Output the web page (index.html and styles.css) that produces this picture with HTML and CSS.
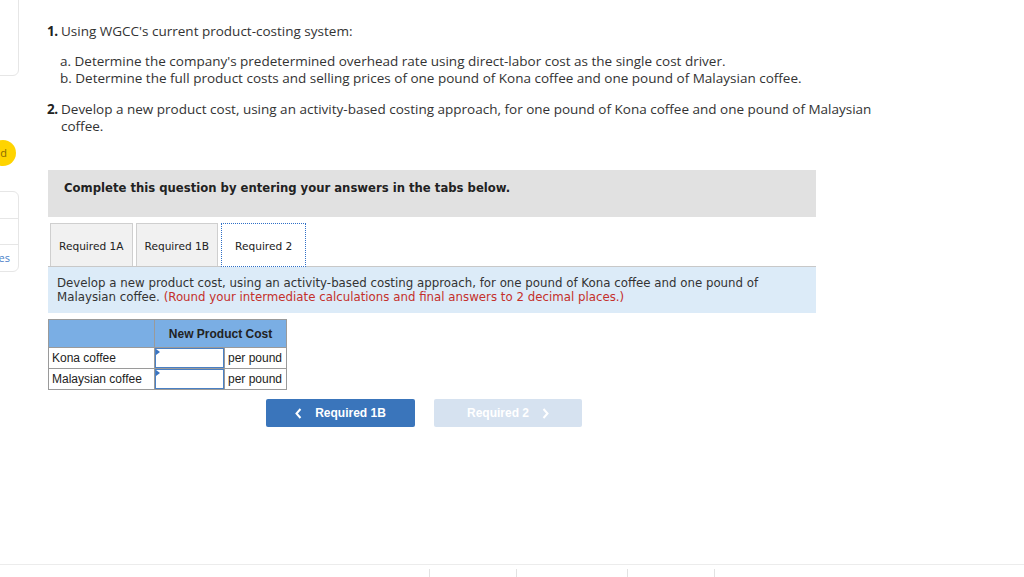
FILE: index.html
```html
<!DOCTYPE html>
<html lang="en">
<head>
<meta charset="utf-8">
<title>Product costing</title>
<link rel="stylesheet" href="styles.css">
</head>
<body>
<div class="page">
  <div class="main">
    <aside class="sidebar">
      <div class="side-card top-card"></div>
      <div class="badge">d</div>
      <div class="side-card list-card">
        <div class="side-row"></div>
        <div class="side-row"></div>
        <div class="side-row side-link">es</div>
      </div>
    </aside>
    <section class="content">
      <div class="item">
        <span class="num">1.</span>
        <span class="item-text">Using WGCC's current product-costing system:</span>
      </div>
      <div class="subs">
        <div>a. Determine the company's predetermined overhead rate using direct-labor cost as the single cost driver.</div>
        <div>b. Determine the full product costs and selling prices of one pound of Kona coffee and one pound of Malaysian coffee.</div>
      </div>
      <div class="item item-two">
        <span class="num">2.</span>
        <span class="item-text">Develop a new product cost, using an activity-based costing approach, for one pound of Kona coffee and one pound of Malaysian<br>coffee.</span>
      </div>

      <div class="instruction">Complete this question by entering your answers in the tabs below.</div>

      <div class="tabs">
        <div class="tab">Required 1A</div>
        <div class="tab">Required 1B</div>
        <div class="tab tab-active">Required 2</div>
      </div>

      <div class="prompt">Develop a new product cost, using an activity-based costing approach, for one pound of Kona coffee and one pound of<br>Malaysian coffee. <span class="note">(Round your intermediate calculations and final answers to 2 decimal places.)</span></div>

      <table class="grid">
        <thead>
          <tr>
            <th class="c-label"></th>
            <th class="c-head" colspan="2">New Product Cost</th>
          </tr>
        </thead>
        <tbody>
          <tr>
            <td class="c-label">Kona coffee</td>
            <td class="c-input"><span class="input"></span></td>
            <td class="c-unit">per pound</td>
          </tr>
          <tr>
            <td class="c-label">Malaysian coffee</td>
            <td class="c-input"><span class="input"></span></td>
            <td class="c-unit">per pound</td>
          </tr>
        </tbody>
      </table>

      <div class="nav">
        <div class="btn btn-prev">
          <svg class="chev" width="7" height="11" viewBox="0 0 7 11"><path d="M5.5 1 L1.5 5.5 L5.5 10" fill="none" stroke="#fff" stroke-width="2"/></svg>
          Required 1B
        </div>
        <div class="btn btn-next">
          Required 2
          <svg class="chev chev-r" width="7" height="11" viewBox="0 0 7 11"><path d="M1.5 1 L5.5 5.5 L1.5 10" fill="none" stroke="#fff" stroke-width="2"/></svg>
        </div>
      </div>
    </section>
  </div>
  <footer class="footer">
    <span class="tick t1"></span>
    <span class="tick t2"></span>
    <span class="tick t3"></span>
    <span class="tick t4"></span>
  </footer>
</div>
</body>
</html>
```

FILE: styles.css
```css
* { box-sizing: border-box; }

body {
  margin: 0;
  background: #ffffff;
  color: #333333;
  font-family: "Open Sans", Lato, Arial, sans-serif;
}

.page {
  display: flex;
  flex-direction: column;
  width: 1024px;
  height: 577px;
  overflow: hidden;
}

.main {
  display: flex;
  flex: 1;
}

/* ---------- sidebar ---------- */
.sidebar {
  width: 20px;
  flex-shrink: 0;
  display: flex;
  flex-direction: column;
}

.side-card {
  width: 80px;
  margin-left: -61px;
  border: 1px solid #e6e6e6;
  border-radius: 6px;
  background: #fff;
}

.top-card {
  margin-top: -10px;
  height: 86px;
}

.badge {
  margin-top: 64px;
  margin-left: -10px;
  width: 26px;
  height: 26px;
  border-radius: 50%;
  background: #ffd400;
  color: #8a6a00;
  font-family: "Open Sans", sans-serif;
  font-size: 11px;
  line-height: 26px;
  text-align: right;
  padding-right: 9px;
}

.list-card {
  margin-top: 25px;
  height: 81px;
  display: flex;
  flex-direction: column;
}

.side-row {
  height: 27px;
  border-bottom: 1px solid #e6e6e6;
}

.side-row:last-child {
  border-bottom: 0;
  flex: 1;
}

.side-link {
  text-align: right;
  padding-right: 8px;
  color: #4a80c8;
  font-family: "Open Sans", sans-serif;
  font-size: 11px;
  line-height: 26px;
}

/* ---------- content ---------- */
.content {
  flex: 1;
  padding: 23px 0 0 27px;
}

.item {
  display: flex;
  font-size: 13.5px;
  line-height: 17px;
  color: #333;
}

.num {
  font-weight: 700;
  width: 14px;
  flex-shrink: 0;
  color: #222;
  letter-spacing: -0.5px;
}

.subs {
  margin: 13px 0 14px 13px;
  font-size: 13.5px;
  line-height: 17px;
}

.instruction {
  margin: 35px 0 0 1px;
  width: 768px;
  height: 47px;
  background: #e1e1e1;
  padding: 11px 0 0 16px;
  font-family: "DejaVu Sans", Verdana, sans-serif;
  font-weight: 700;
  font-size: 11.65px;
  line-height: 15px;
  color: #222;
}

.tabs {
  margin: 6px 0 0 1px;
  width: 768px;
  display: flex;
  gap: 3px;
  padding-left: 2px;
  border-bottom: 1px solid #c8c8c8;
}

.tab {
  height: 43px;
  padding: 0 8px;
  border: 1px solid #cfcfcf;
  border-bottom: 0;
  background: #f1f1f1;
  font-family: "DejaVu Sans", Verdana, sans-serif;
  font-size: 10.6px;
  line-height: 44px;
  color: #222;
  white-space: nowrap;
}

.tab-active {
  background: #fff;
  border: 1px dotted #2f6fc6;
  border-bottom: 1px dotted #2f6fc6;
  padding: 0 13px;
  margin-bottom: -1px;
  height: 44px;
}

.prompt {
  margin-left: 1px;
  width: 768px;
  height: 46px;
  background: #dcebf8;
  padding: 9px 9px 0;
  font-family: "DejaVu Sans", Verdana, sans-serif;
  font-size: 11.8px;
  line-height: 14px;
  color: #333;
}

.note { color: #c4302b; }

/* ---------- table ---------- */
.grid {
  margin: 6px 0 0 1px;
  border-collapse: collapse;
  font-family: "Liberation Sans", Arial, sans-serif;
  font-size: 12px;
  color: #222;
}

.grid th, .grid td {
  border: 1px solid #9a9a9a;
  padding: 0;
}

.grid thead th {
  background: #7aaee4;
  height: 28px;
  font-weight: 700;
  text-align: center;
}

.c-label {
  width: 106px;
  padding-left: 3px !important;
  text-align: left;
  height: 21px;
}

.c-input {
  width: 70px;
}

.input {
  display: block;
  height: 20px;
  border: 1px solid #4a80c4;
  background: #fff;
  position: relative;
}

.input::before {
  content: "";
  position: absolute;
  left: 0;
  top: 0;
  border-style: solid;
  border-width: 3px 0 3px 4px;
  border-color: transparent transparent transparent #3a74c0;
}

.c-unit {
  width: 62px;
  padding-left: 3px !important;
}

/* ---------- nav buttons ---------- */
.nav {
  margin: 9px 0 0 219px;
  display: flex;
  gap: 19px;
}

.btn {
  width: 149px;
  height: 28px;
  border-radius: 2px;
  display: flex;
  align-items: center;
  justify-content: center;
  font-family: "Liberation Sans", Arial, sans-serif;
  font-weight: 700;
  font-size: 12px;
  color: #fff;
}

.btn-prev { background: #3a75bb; }
.btn-next { background: #d6e2f0; width: 148px; }

.chev {
  display: block;
  margin-right: 13px;
}

.chev-r {
  margin: 0 0 0 13px;
}

/* ---------- footer ---------- */
.footer {
  height: 13px;
  border-top: 1px solid #ececec;
  display: flex;
  position: relative;
}

.tick {
  position: absolute;
  top: 4px;
  bottom: 0;
  width: 1px;
  background: #e2e2e2;
}

.t1 { left: 429px; }
.t2 { left: 516px; }
.t3 { left: 627px; }
.t4 { left: 714px; }
```
